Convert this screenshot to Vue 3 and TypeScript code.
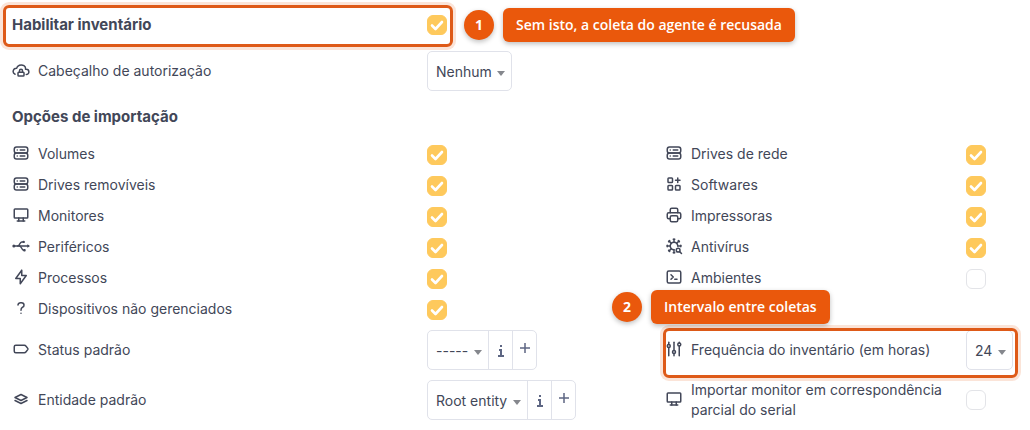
<script setup lang="ts">
import { ref } from 'vue'

type IconName =
  | 'cloudLock' | 'server' | 'monitor' | 'usb' | 'bolt' | 'question' | 'label'
  | 'stack' | 'apps' | 'printer' | 'virus' | 'terminal' | 'sliders'

interface Field {
  id: string
  label: string
  icon?: IconName
  checked?: boolean
  options?: string[]
  actions?: boolean
  strong?: boolean
  callout?: { step: number; text: string; kind: 'beside' | 'above' }
}

interface Row {
  size: 'first' | 'short' | 'tall'
  fields: Field[]
}

const icons: Record<IconName, string[]> = {
  cloudLock: [
    'M19 18a3.5 3.5 0 0 0 0 -7h-1c.4 -1.8 -.4 -3.600 -2.1 -4.700c-1.700 -1.100 -4 -1.300 -6 -.6s-3.400 2.300 -3.800 4.100c-2.100 -.1 -3.900 1.200 -4.400 3.100c-.5 1.900 .5 3.900 2.400 4.700',
    'M8 15m0 1a1 1 0 0 1 1 -1h6a1 1 0 0 1 1 1v3a1 1 0 0 1 -1 1h-6a1 1 0 0 1 -1 -1z',
    'M10 15v-2a2 2 0 0 1 4 0v2',
  ],
  server: [
    'M3 7a3 3 0 0 1 3 -3h12a3 3 0 0 1 3 3v2a3 3 0 0 1 -3 3h-12a3 3 0 0 1 -3 -3z',
    'M3 15a3 3 0 0 1 3 -3h12a3 3 0 0 1 3 3v2a3 3 0 0 1 -3 3h-12a3 3 0 0 1 -3 -3z',
    'M7 8v.01', 'M7 16v.01', 'M11 8h6', 'M11 16h6',
  ],
  monitor: [
    'M3 5a1 1 0 0 1 1 -1h16a1 1 0 0 1 1 1v10a1 1 0 0 1 -1 1h-16a1 1 0 0 1 -1 -1z',
    'M7 20h10', 'M9 16v4', 'M15 16v4',
  ],
  usb: [
    'M1.500 12a1 1 0 1 0 2 0a1 1 0 1 0 -2 0', 'M2 12h1',
    'M4 12h18', 'M21 11l1.500 1l-1.500 1',
    'M7.500 12c3 0 2.500 -5.500 5.500 -5.500h2', 'M15 6.500a.6 .6 0 1 0 1.200 0a.6 .6 0 1 0 -1.200 0',
    'M10 12c3 0 2.500 5.500 5.500 5.500h1', 'M16 17h1.200v1.200h-1.200z',
  ],
  bolt: ['M13 3v7h6l-8 11v-7h-6l8 -11'],
  question: [
    'M8 8a3.500 3 0 0 1 3.500 -3h1a3.500 3 0 0 1 3.500 3a3 3 0 0 1 -2 3a3 4 0 0 0 -2 4',
    'M12 19v.01',
  ],
  label: ['M16.500 7h-11.500a2 2 0 0 0 -2 2v6a2 2 0 0 0 2 2h11.500c.8 0 1.500 -.3 2 -1l2.500 -3.200a1.500 1.500 0 0 0 0 -1.600l-2.500 -3.200c-.5 -.7 -1.200 -1 -2 -1z'],
  stack: ['M12 6l-8 4l8 4l8 -4l-8 -4', 'M4 14l8 4l8 -4'],
  apps: [
    'M4 5a1 1 0 0 1 1 -1h4a1 1 0 0 1 1 1v4a1 1 0 0 1 -1 1h-4a1 1 0 0 1 -1 -1z',
    'M4 15a1 1 0 0 1 1 -1h4a1 1 0 0 1 1 1v4a1 1 0 0 1 -1 1h-4a1 1 0 0 1 -1 -1z',
    'M14 15a1 1 0 0 1 1 -1h4a1 1 0 0 1 1 1v4a1 1 0 0 1 -1 1h-4a1 1 0 0 1 -1 -1z',
    'M14 7h6', 'M17 4v6',
  ],
  printer: [
    'M17 17h2a2 2 0 0 0 2 -2v-4a2 2 0 0 0 -2 -2h-14a2 2 0 0 0 -2 2v4a2 2 0 0 0 2 2h2',
    'M17 9v-4a2 2 0 0 0 -2 -2h-6a2 2 0 0 0 -2 2v4',
    'M7 15a2 2 0 0 1 2 -2h6a2 2 0 0 1 2 2v4a2 2 0 0 1 -2 2h-6a2 2 0 0 1 -2 -2z',
  ],
  virus: [
    'M17 12a5 5 0 1 0 -5 5', 'M12 7v-4', 'M11 3h2', 'M15.500 8.500l3 -3', 'M17.800 4.800l1.400 1.400',
    'M17 12h4', 'M21 11v2', 'M12 17v4', 'M11 21h2', 'M8.500 15.500l-3 3', 'M6.200 19.200l-1.400 -1.400',
    'M7 12h-4', 'M3 13v-2', 'M8.500 8.500l-3 -3', 'M4.800 6.200l1.400 -1.400',
    'M15 17.500a2.500 2.500 0 1 0 5 0a2.500 2.500 0 1 0 -5 0', 'M19.500 19.500l2.500 2.500',
  ],
  terminal: [
    'M8 9l3 3l-3 3', 'M13 15h3',
    'M3 6a2 2 0 0 1 2 -2h14a2 2 0 0 1 2 2v12a2 2 0 0 1 -2 2h-14a2 2 0 0 1 -2 -2z',
  ],
  sliders: [
    'M3 8a2 2 0 1 0 4 0a2 2 0 1 0 -4 0', 'M5 3v3', 'M5 10v11',
    'M10 16a2 2 0 1 0 4 0a2 2 0 1 0 -4 0', 'M12 3v11', 'M12 18v3',
    'M17 6a2 2 0 1 0 4 0a2 2 0 1 0 -4 0', 'M19 3v1', 'M19 8v13',
  ],
}

const general = ref<Row[]>([
  {
    size: 'first',
    fields: [{
      id: 'enable', label: 'Habilitar inventário', checked: true, strong: true,
      callout: { step: 1, text: 'Sem isto, a coleta do agente é recusada', kind: 'beside' },
    }],
  },
  { size: 'tall', fields: [{ id: 'auth', label: 'Cabeçalho de autorização', icon: 'cloudLock', options: ['Nenhum'] }] },
])

const imports = ref<Row[]>([
  { size: 'short', fields: [
    { id: 'volumes', label: 'Volumes', icon: 'server', checked: true },
    { id: 'network', label: 'Drives de rede', icon: 'server', checked: true },
  ] },
  { size: 'short', fields: [
    { id: 'removable', label: 'Drives removíveis', icon: 'server', checked: true },
    { id: 'software', label: 'Softwares', icon: 'apps', checked: true },
  ] },
  { size: 'short', fields: [
    { id: 'monitors', label: 'Monitores', icon: 'monitor', checked: true },
    { id: 'printers', label: 'Impressoras', icon: 'printer', checked: true },
  ] },
  { size: 'short', fields: [
    { id: 'peripherals', label: 'Periféricos', icon: 'usb', checked: true },
    { id: 'antivirus', label: 'Antivírus', icon: 'virus', checked: true },
  ] },
  { size: 'short', fields: [
    { id: 'processes', label: 'Processos', icon: 'bolt', checked: true },
    { id: 'environments', label: 'Ambientes', icon: 'terminal', checked: false },
  ] },
  { size: 'short', fields: [
    { id: 'unmanaged', label: 'Dispositivos não gerenciados', icon: 'question', checked: true },
  ] },
  { size: 'tall', fields: [
    { id: 'status', label: 'Status padrão', icon: 'label', options: ['-----'], actions: true },
    {
      id: 'frequency', label: 'Frequência do inventário (em horas)', icon: 'sliders', options: ['24'],
      callout: { step: 2, text: 'Intervalo entre coletas', kind: 'above' },
    },
  ] },
  { size: 'tall', fields: [
    { id: 'entity', label: 'Entidade padrão', icon: 'stack', options: ['Root entity'], actions: true },
    { id: 'partial', label: 'Importar monitor em correspondência parcial do serial', icon: 'monitor', checked: false },
  ] },
])
</script>

<template>
  <form class="settings" @submit.prevent>
    <template v-for="(rows, section) in [general, imports]" :key="section">
      <h2 v-if="section === 1" class="heading">Opções de importação</h2>
      <div v-for="(row, r) in rows" :key="r" class="row" :class="row.size">
        <template v-for="field in row.fields" :key="field.id">
          <div class="name">
            <svg v-if="field.icon" class="icon" viewBox="0 0 24 24" aria-hidden="true">
              <path v-for="d in icons[field.icon]" :key="d" :d="d" />
            </svg>
            <label :for="field.id" :class="{ strong: field.strong }">{{ field.label }}</label>
            <span v-if="field.callout" class="frame" :class="field.callout.kind" />
            <div v-if="field.callout?.kind === 'above'" class="callout above">
              <span class="step">{{ field.callout.step }}</span>
              <span class="bubble">{{ field.callout.text }}</span>
            </div>
          </div>
          <div class="control">
            <div v-if="field.options" class="group">
              <span class="picker">
                <select :id="field.id">
                  <option v-for="option in field.options" :key="option">{{ option }}</option>
                </select>
              </span>
              <template v-if="field.actions">
                <button type="button" aria-label="Informações">
                  <svg class="info" viewBox="0 0 6 12" aria-hidden="true">
                    <path d="M1 5h2v6M0 11h6" /><path class="dot" d="M2 0h2v2h-2z" />
                  </svg>
                </button>
                <button type="button" aria-label="Adicionar">
                  <svg class="plus" viewBox="0 0 10 10" aria-hidden="true"><path d="M5 0v10M0 5h10" /></svg>
                </button>
              </template>
            </div>
            <input v-else :id="field.id" v-model="field.checked" type="checkbox" />
            <div v-if="field.callout?.kind === 'beside'" class="callout beside">
              <span class="step">{{ field.callout.step }}</span>
              <span class="bubble">{{ field.callout.text }}</span>
            </div>
          </div>
        </template>
      </div>
    </template>
  </form>
</template>

<style>
body {
  margin: 0;
  background: #fff;
}
</style>

<style scoped>
.settings {
  padding-left: 12px;
  color: #424758;
  font: 14px/20px Inter, "Liberation Sans", sans-serif;
}
.row {
  display: grid;
  grid-template-columns: 415fr 238fr 301fr 64fr;
  align-items: center;
}
.first {
  min-height: 42px;
  padding-top: 4px;
}
.short { min-height: 31px; }
.short .name { padding-bottom: 2px; }
.tall { min-height: 50px; }
.heading {
  margin: 0;
  padding: 11px 0 12px;
  font-size: 15px;
  line-height: 20px;
  font-weight: 700;
}
.name {
  position: relative;
  display: flex;
  align-items: center;
  gap: 8px;
}
.strong {
  font-size: 15px;
  font-weight: 700;
}
.icon {
  flex: none;
  width: 18px;
  height: 18px;
  margin-bottom: 2px;
  fill: none;
  stroke: currentColor;
  stroke-width: 2;
  stroke-linecap: round;
  stroke-linejoin: round;
}
.control {
  position: relative;
  display: flex;
  align-items: center;
}
input {
  appearance: none;
  width: 20px;
  height: 20px;
  margin: 0;
  border: 1px solid #e3e4e8;
  border-radius: 6px;
  background: #fff;
}
input:checked {
  border-color: #fec95c;
  background: #fec95c url("data:image/svg+xml,%3Csvg xmlns='http://www.w3.org/2000/svg' viewBox='0 0 18 18'%3E%3Cpath d='M4 9.500l3.500 3.500L14 6' fill='none' stroke='white' stroke-width='2.600' stroke-linecap='round' stroke-linejoin='round'/%3E%3C/svg%3E") center / 100%;
}
.group {
  display: flex;
  height: 40px;
  box-sizing: border-box;
  border: 1px solid #e0e2ea;
  border-radius: 5px;
}
.picker {
  position: relative;
  display: flex;
}
.picker::after {
  content: "";
  position: absolute;
  right: 6px;
  top: 19px;
  border: 4px solid transparent;
  border-top: 5px solid #85878d;
  border-bottom: 0;
  pointer-events: none;
}
select {
  appearance: none;
  margin: 0;
  padding: 2px 19px 0 8px;
  border: 0;
  background: transparent;
  color: inherit;
  font: inherit;
}
button {
  display: flex;
  justify-content: center;
  width: 24px;
  padding: 0;
  border: 0;
  border-left: 1px solid #e0e2ea;
  background: transparent;
  color: #5d6683;
}
.info, .plus {
  fill: none;
  stroke: currentColor;
}
.info {
  width: 6px;
  height: 12px;
  margin-top: 14px;
  stroke-width: 2;
}
.dot {
  fill: currentColor;
  stroke: none;
}
.plus {
  width: 10px;
  height: 10px;
  margin-top: 12px;
  stroke-width: 1.500;
}
.frame {
  position: absolute;
  z-index: 1;
  border: 3px solid #de5a18;
  border-radius: 6px;
  box-shadow: 0 0 0 3px #fbe4d8;
  pointer-events: none;
}
.frame.beside { inset: -10px -26px -12px -9px; }
.frame.above { inset: -12px -52px -18px -2px; }
.callout {
  position: absolute;
  z-index: 2;
  display: flex;
  align-items: center;
  gap: 9px;
  color: #fff;
  font: 600 14px/20px "Open Sans", "Noto Sans", sans-serif;
  white-space: nowrap;
}
.callout.beside { left: 37px; }
.callout.above {
  left: -53px;
  bottom: 36px;
}
.step {
  width: 30px;
  line-height: 30px;
  border-radius: 50%;
  background: #ea580c;
  box-shadow: 0 2px 5px rgb(0 0 0 / 25%);
  font-weight: 700;
  text-align: center;
}
.bubble {
  padding: 7px 13px;
  border-radius: 6px;
  background: #ea580c;
  box-shadow: 0 2px 5px rgb(0 0 0 / 25%);
}
</style>
